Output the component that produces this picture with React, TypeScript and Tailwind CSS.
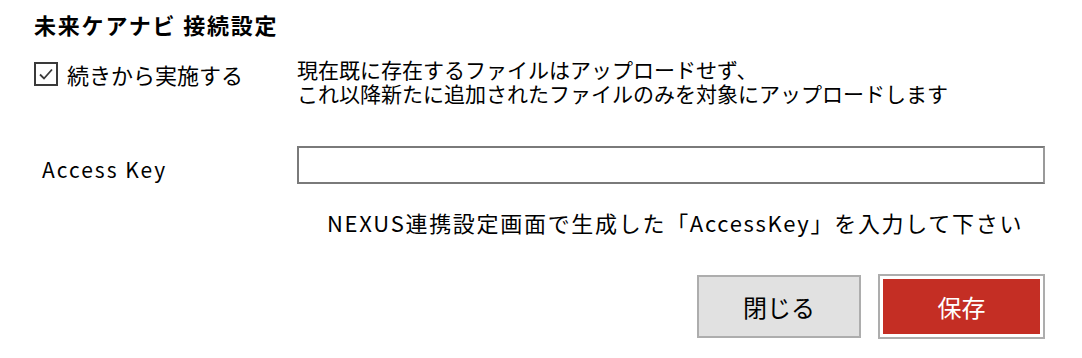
import React from 'react';

const font = { fontFamily: '"Noto Sans CJK JP", "Noto Sans", sans-serif' };

export default function App() {
  return (
    <div className="w-[1082px] h-[358px] bg-white text-black overflow-hidden flex flex-col pl-[34px] pr-[37px] pt-[9px]" style={font}>
      {/* Title */}
      <div className="text-[22px] font-bold leading-[30px] tracking-[1.8px]">未来ケアナビ 接続設定</div>

      {/* Resume option */}
      <div className="flex mt-[18px]">
        <div className="w-[263px] flex items-start gap-[9px] pt-[5px]">
          <div className="w-[24px] h-[24px] border-2 border-[#3a3a3a] bg-white flex items-center justify-center shrink-0">
            <svg width="18" height="18" viewBox="0 0 18 18" fill="none">
              <path d="M3 9.5l4 4 8-9" stroke="#3a3a3a" strokeWidth="1.8" />
            </svg>
          </div>
          <span className="text-[22px] leading-[24px]">続きから実施する</span>
        </div>
        <div className="text-[21px] leading-[24px]">
          <div>現在既に存在するファイルはアップロードせず、</div>
          <div>これ以降新たに追加されたファイルのみを対象にアップロードします</div>
        </div>
      </div>

      {/* Access key */}
      <div className="flex items-center mt-[41px]">
        <div className="w-[263px] pl-[8px] text-[21px] leading-[28px] tracking-[2px] pt-[8px]">Access Key</div>
        <input
          className="flex-1 h-[38px] bg-white border-2 border-t-[#7a7a7a] border-l-[#7a7a7a] border-r-[#9a9a9a] border-b-[#7a7a7a] outline-none"
          defaultValue=""
        />
      </div>

      <div className="mt-[23px] pl-[293px] text-[22px] leading-[30px] tracking-[1.7px] whitespace-nowrap">
        NEXUS連携設定画面で生成した「AccessKey」を入力して下さい
      </div>

      {/* Buttons */}
      <div className="flex justify-end items-center gap-[17px] mt-[37px]">
        <button className="w-[164px] h-[63px] bg-[#e1e1e1] border-2 border-[#adadad] text-[24px] text-black">
          閉じる
        </button>
        <button className="w-[167px] h-[65px] border-2 border-[#adadad] bg-white p-[3px]">
          <span className="w-full h-full flex items-center justify-center bg-[#c42e24] text-white text-[24px]">
            保存
          </span>
        </button>
      </div>
    </div>
  );
}
